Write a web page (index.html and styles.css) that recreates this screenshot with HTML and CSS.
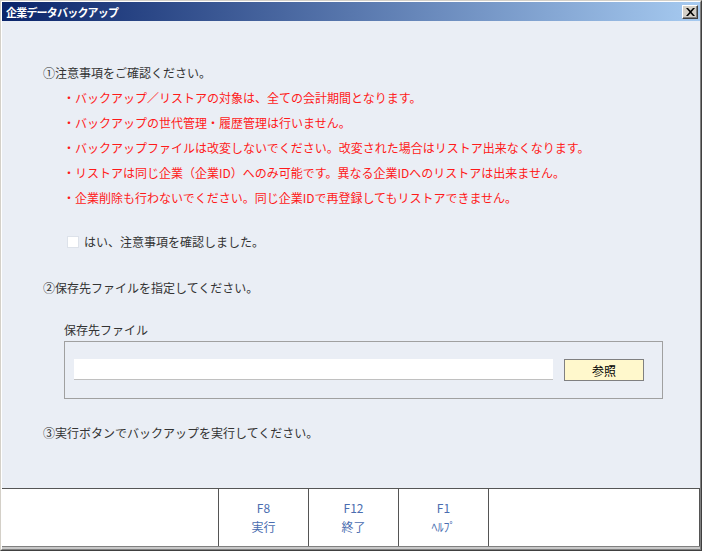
FILE: index.html
```html
<!DOCTYPE html>
<html lang="ja">
<head>
<meta charset="utf-8">
<title>企業データバックアップ</title>
<link rel="stylesheet" href="styles.css">
</head>
<body>
<div class="window">
  <div class="frame">
    <div class="titlebar">
      <span class="title">企業データバックアップ</span>
      <span class="close"><svg width="9" height="8" viewBox="0 0 9 8"><path d="M0 0h2l2.5 2.8L7 0h2L5.5 4 9 8H7L4.5 5.2 2 8H0l3.5-4z" fill="#000"/></svg></span>
    </div>
    <div class="content">
      <p class="line">①注意事項をご確認ください。</p>
      <ul class="notes">
        <li>・バックアップ／リストアの対象は、全ての会計期間となります。</li>
        <li>・バックアップの世代管理・履歴管理は行いません。</li>
        <li>・バックアップファイルは改変しないでください。改変された場合はリストア出来なくなります。</li>
        <li>・リストアは同じ企業（企業ID）へのみ可能です。異なる企業IDへのリストアは出来ません。</li>
        <li>・企業削除も行わないでください。同じ企業IDで再登録してもリストアできません。</li>
      </ul>
      <label class="check"><span class="box"></span>はい、注意事項を確認しました。</label>
      <p class="line step2">②保存先ファイルを指定してください。</p>
      <div class="fieldlabel">保存先ファイル</div>
      <div class="group">
        <div class="input"></div>
        <button class="browse">参照</button>
      </div>
      <p class="line step3">③実行ボタンでバックアップを実行してください。</p>
    </div>
    <div class="footer">
      <div class="fcell first"></div>
      <div class="fcell key"><span>F8</span><span>実行</span></div>
      <div class="fcell key"><span>F12</span><span>終了</span></div>
      <div class="fcell key"><span>F1</span><span>ﾍﾙﾌﾟ</span></div>
      <div class="fcell last"></div>
    </div>
  </div>
</div>
</body>
</html>
```

FILE: styles.css
```css
* { box-sizing: border-box; }
html, body { margin: 0; padding: 0; }
body {
  width: 702px;
  height: 551px;
  font-family: "Noto Sans CJK JP", "Noto Sans", sans-serif;
  font-size: 12px;
  color: #333;
  background: #d4d0c8;
}
.window {
  width: 702px;
  height: 551px;
  border: 1px solid;
  border-color: #d4d0c8 #404040 #404040 #d4d0c8;
}
.frame {
  height: 100%;
  display: flex;
  flex-direction: column;
  border: 1px solid;
  border-color: #ffffff #808080 #808080 #ffffff;
  background: #eaeef5;
}
.titlebar {
  height: 19px;
  flex: none;
  display: flex;
  align-items: center;
  justify-content: space-between;
  background: linear-gradient(to right, #0a246a, #a6caf0);
  padding-left: 4px;
}
.title {
  color: #fff;
  font-weight: bold;
  font-size: 11px;
  letter-spacing: -0.8px;
}
.close {
  width: 16px;
  height: 14px;
  margin-right: 2px;
  background: #d4d0c8;
  border: 1px solid;
  border-color: #fff #404040 #404040 #fff;
  box-shadow: inset -1px -1px 0 #808080;
  display: flex;
  align-items: center;
  justify-content: center;
}
.content {
  flex: 1;
  padding: 39px 0 0 41px;
}
.line {
  margin: 0;
  line-height: 25px;
}
.notes {
  list-style: none;
  margin: 0;
  padding: 0 0 0 20px;
  color: #ff1a1a;
  line-height: 25px;
}
.check {
  display: flex;
  align-items: center;
  margin: 19px 0 0 24px;
  height: 25px;
}
.box {
  width: 12px;
  height: 12px;
  background: #fff;
  border: 1px solid #dde2ea;
  margin-right: 5px;
}
.step2 { margin-top: 21px; }
.fieldlabel {
  margin: 20px 0 0 21px;
  line-height: 20px;
}
.group {
  margin: 1px 0 0 21px;
  width: 599px;
  height: 58px;
  border: 1px solid #a0a0a0;
  padding: 17px 0 0 9px;
  display: flex;
  align-items: flex-start;
  gap: 11px;
}
.input {
  width: 479px;
  height: 21px;
  background: #fff;
  border-bottom: 1px solid #c0c0c0;
}
.browse {
  width: 80px;
  height: 22px;
  background: #fff8cc;
  border: 1px solid #808080;
  font-family: "Noto Sans CJK JP", sans-serif;
  font-size: 12px;
  color: #000;
  padding: 0;
}
.step3 { margin-top: 21px; }
.footer {
  height: 59px;
  flex: none;
  display: flex;
  background: #fff;
  border-top: 1px solid #555;
  border-bottom: 1px solid #808080;
  margin-bottom: 2px;
  box-shadow: 0 2px 0 #c8c8c8;
}
.fcell {
  border-right: 1px solid #555;
}
.first { width: 217px; }
.key {
  width: 90px;
  display: flex;
  flex-direction: column;
  align-items: center;
  padding-top: 9px;
  line-height: 19px;
  color: #4a6db0;
}
.last { flex: 1; }
```
